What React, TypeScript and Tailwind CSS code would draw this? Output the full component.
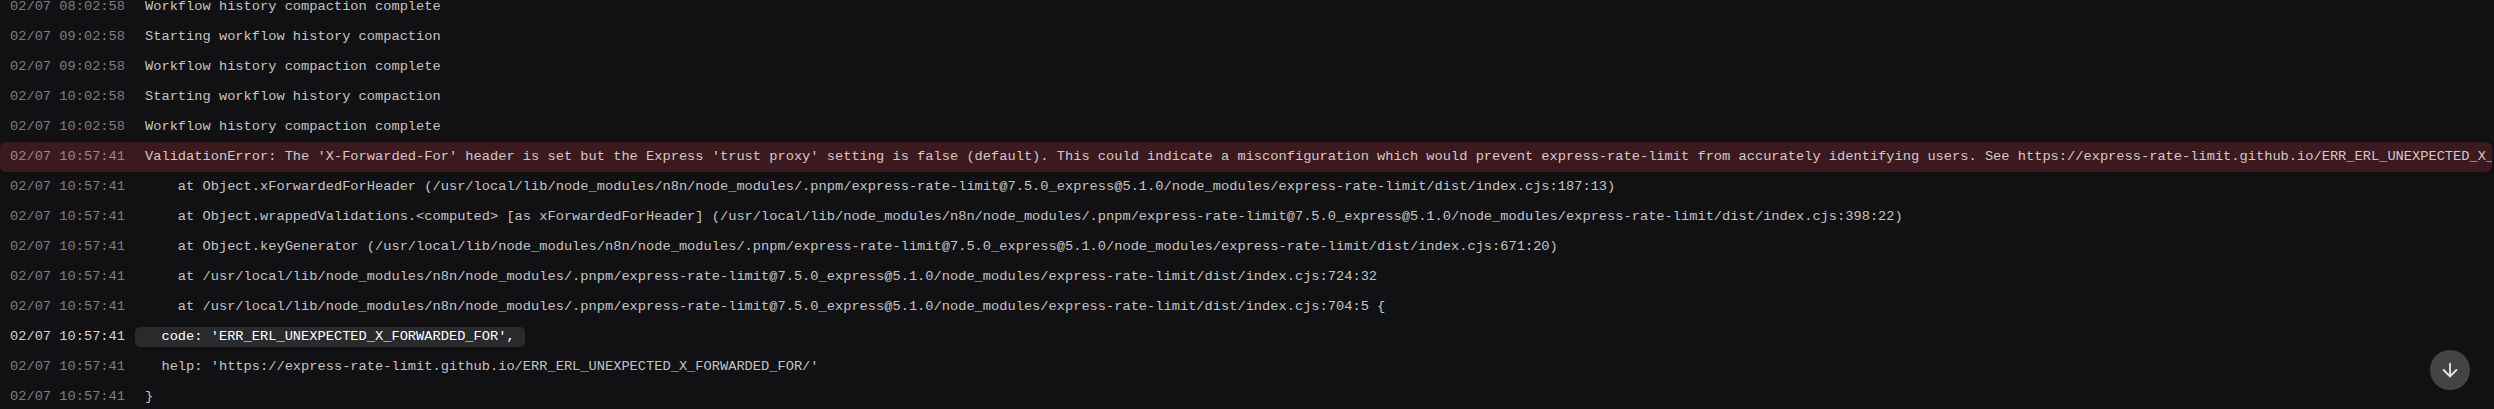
import React from 'react';
import { ArrowDown } from 'lucide-react';

type LogLine = { ts: string; text: string; kind?: 'error' | 'active' };

const lines: LogLine[] = [
  { ts: '02/07 08:02:58', text: 'Workflow history compaction complete' },
  { ts: '02/07 09:02:58', text: 'Starting workflow history compaction' },
  { ts: '02/07 09:02:58', text: 'Workflow history compaction complete' },
  { ts: '02/07 10:02:58', text: 'Starting workflow history compaction' },
  { ts: '02/07 10:02:58', text: 'Workflow history compaction complete' },
  {
    ts: '02/07 10:57:41',
    kind: 'error',
    text: "ValidationError: The 'X-Forwarded-For' header is set but the Express 'trust proxy' setting is false (default). This could indicate a misconfiguration which would prevent express-rate-limit from accurately identifying users. See https://express-rate-limit.github.io/ERR_ERL_UNEXPECTED_X_FORWARDED_FOR/ for more information.",
  },
  {
    ts: '02/07 10:57:41',
    text: '    at Object.xForwardedForHeader (/usr/local/lib/node_modules/n8n/node_modules/.pnpm/express-rate-limit@7.5.0_express@5.1.0/node_modules/express-rate-limit/dist/index.cjs:187:13)',
  },
  {
    ts: '02/07 10:57:41',
    text: '    at Object.wrappedValidations.<computed> [as xForwardedForHeader] (/usr/local/lib/node_modules/n8n/node_modules/.pnpm/express-rate-limit@7.5.0_express@5.1.0/node_modules/express-rate-limit/dist/index.cjs:398:22)',
  },
  {
    ts: '02/07 10:57:41',
    text: '    at Object.keyGenerator (/usr/local/lib/node_modules/n8n/node_modules/.pnpm/express-rate-limit@7.5.0_express@5.1.0/node_modules/express-rate-limit/dist/index.cjs:671:20)',
  },
  {
    ts: '02/07 10:57:41',
    text: '    at /usr/local/lib/node_modules/n8n/node_modules/.pnpm/express-rate-limit@7.5.0_express@5.1.0/node_modules/express-rate-limit/dist/index.cjs:724:32',
  },
  {
    ts: '02/07 10:57:41',
    text: '    at /usr/local/lib/node_modules/n8n/node_modules/.pnpm/express-rate-limit@7.5.0_express@5.1.0/node_modules/express-rate-limit/dist/index.cjs:704:5 {',
  },
  { ts: '02/07 10:57:41', kind: 'active', text: "  code: 'ERR_ERL_UNEXPECTED_X_FORWARDED_FOR'," },
  { ts: '02/07 10:57:41', text: "  help: 'https://express-rate-limit.github.io/ERR_ERL_UNEXPECTED_X_FORWARDED_FOR/'" },
  { ts: '02/07 10:57:41', text: '}' },
];

const LogRow: React.FC<{ line: LogLine }> = ({ line }) => {
  const isError = line.kind === 'error';
  const isActive = line.kind === 'active';

  return (
    <div
      className={`flex items-center h-[30px] pl-2.5 gap-2.5 overflow-hidden whitespace-pre ${
        isError ? 'bg-[#3a1a1f] rounded-md mr-0.5' : ''
      }`}
    >
      <span
        className={`shrink-0 ${
          isError ? 'text-[#9a8589]' : isActive ? 'text-[#d4d4d6]' : 'text-[#7e7e82]'
        }`}
      >
        {line.ts}
      </span>
      <span
        className={`px-2.5 leading-5 rounded-[5px] ${
          isError ? 'text-[#d9c6c8]' : isActive ? 'bg-[#2a2a2d] text-white' : 'text-[#c4c4c6]'
        }`}
      >
        {line.text}
      </span>
    </div>
  );
};

export default function App() {
  return (
    <div className="relative h-[409px] w-full overflow-hidden bg-[#111113] font-['Liberation_Mono',monospace] text-[13.7px]">
      {/* Log lines, scrolled slightly past the first row */}
      <div className="-mt-2 flex flex-col">
        {lines.map((line, idx) => (
          <LogRow key={idx} line={line} />
        ))}
      </div>

      {/* Scroll to bottom */}
      <button className="absolute right-6 bottom-[19px] w-10 h-10 rounded-full bg-[#444447] flex items-center justify-center text-[#e6e6e6]">
        <ArrowDown size={22} strokeWidth={2} />
      </button>
    </div>
  );
}
